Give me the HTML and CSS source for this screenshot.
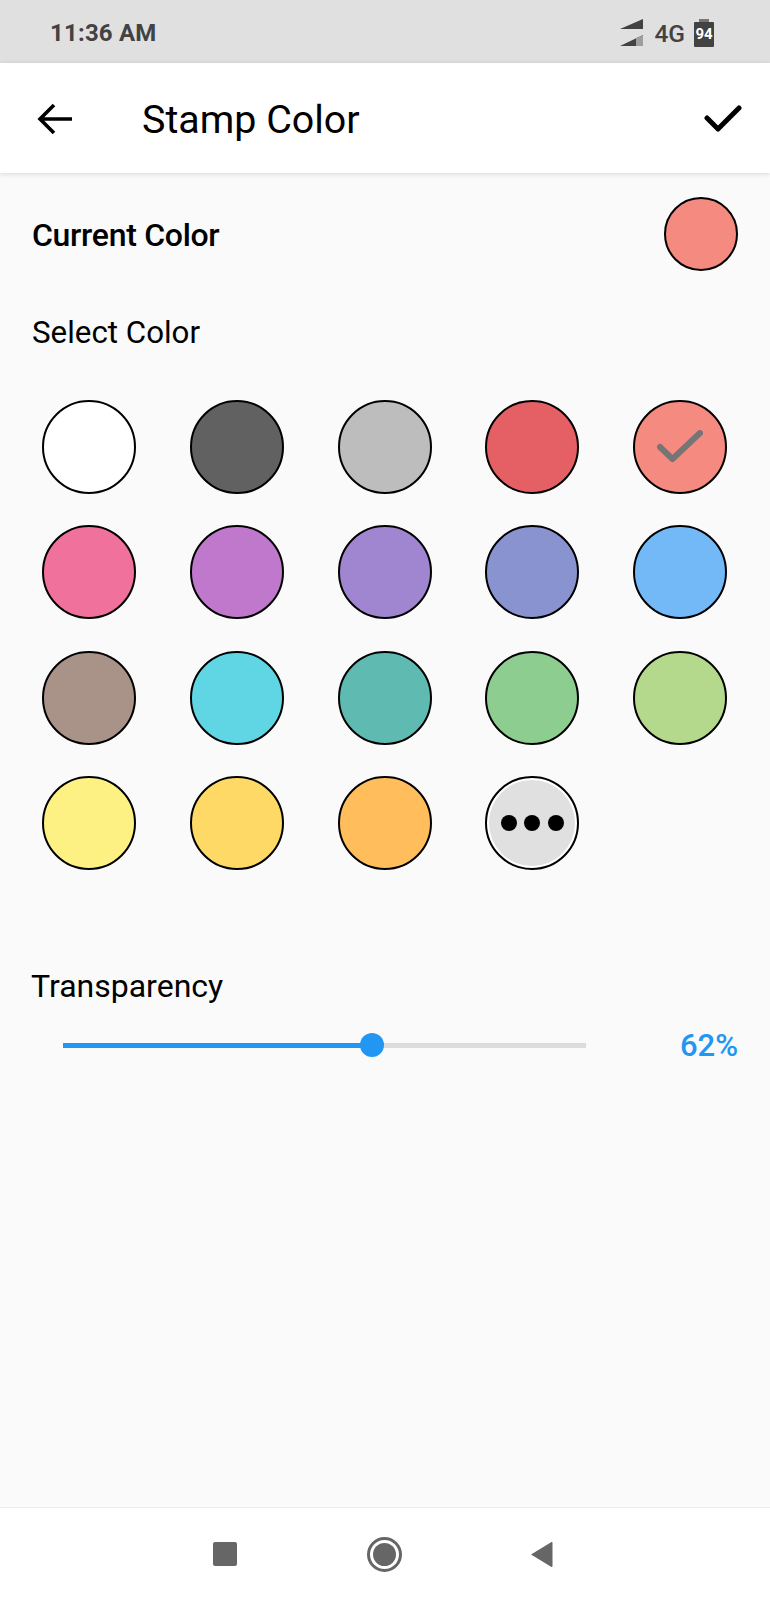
FILE: index.html
```html
<!DOCTYPE html>
<html>
<head>
    <meta charset="UTF-8">
    <title>Stamp Color</title>
    <link rel="stylesheet" href="styles.css">
</head>

<body>
<div class="page">

    <!-- Status bar -->
    <div class="status-bar">
        <span class="status-time">11:36 AM</span>
        <div class="status-icons">
            <svg class="signal-icon" width="24" height="28" viewBox="0 0 24 28">
                <path d="M0 10 L23 0 V10 Z" fill="#424242"/>
                <path d="M0 27 L23 16 V27 Z" fill="#424242"/>
                <path d="M16 19.5 L23 16 V27 H16 Z" fill="#9e9e9e"/>
            </svg>
            <span class="status-net">4G</span>
            <div class="battery"><span class="battery-level">94</span></div>
        </div>
    </div>

    <!-- App bar -->
    <div class="app-bar">
        <svg class="back-icon" width="36" height="32" viewBox="0 0 36 32">
            <path d="M35 16 H3 M17 2 L3 16 L17 30" fill="none" stroke="#000" stroke-width="3.6"/>
        </svg>
        <h1 class="app-title">Stamp Color</h1>
        <svg class="done-icon" width="38" height="28" viewBox="0 0 38 28">
            <path d="M3 13 L14 24 L35 3" fill="none" stroke="#000" stroke-width="5" stroke-linecap="round" stroke-linejoin="round"/>
        </svg>
    </div>

    <div class="content">
        <div class="current-row">
            <span class="current-label">Current Color</span>
            <span class="current-swatch"></span>
        </div>

        <div class="section-label">Select Color</div>

        <div class="swatch-grid">
            <span class="swatch c-white"></span>
            <span class="swatch c-dark"></span>
            <span class="swatch c-gray"></span>
            <span class="swatch c-red"></span>
            <span class="swatch c-salmon">
                <svg width="46" height="34" viewBox="0 0 46 34">
                    <path d="M3 17 L15.5 29 L43 3" fill="none" stroke="#757575" stroke-width="6" stroke-linecap="round" stroke-linejoin="round"/>
                </svg>
            </span>

            <span class="swatch c-pink"></span>
            <span class="swatch c-purple"></span>
            <span class="swatch c-violet"></span>
            <span class="swatch c-indigo"></span>
            <span class="swatch c-blue"></span>

            <span class="swatch c-brown"></span>
            <span class="swatch c-cyan"></span>
            <span class="swatch c-teal"></span>
            <span class="swatch c-green"></span>
            <span class="swatch c-lime"></span>

            <span class="swatch c-yellow"></span>
            <span class="swatch c-amber"></span>
            <span class="swatch c-orange"></span>
            <span class="swatch more-btn">
                <span class="more-dot"></span>
                <span class="more-dot"></span>
                <span class="more-dot"></span>
            </span>
        </div>

        <div class="transparency-label">Transparency</div>
        <div class="slider-row">
            <div class="slider">
                <div class="slider-fill" style="width: 59%"></div>
                <div class="slider-thumb" style="left: 59%"></div>
            </div>
            <span class="slider-value">62%</span>
        </div>
    </div>

    <!-- Navigation bar -->
    <div class="nav-bar">
        <span class="nav-square"></span>
        <span class="nav-home"><span class="nav-home-inner"></span></span>
        <svg width="23" height="27" viewBox="0 0 23 27">
            <path d="M1 13.5 L21.5 1 Q22.5 0.6 22.5 2 V25 Q22.5 26.4 21.5 26 Z" fill="#666"/>
        </svg>
    </div>

</div>
</body>
</html>
```

FILE: styles.css
```css
* {box-sizing: border-box;}
body {margin: 0; font-family: Roboto, "Liberation Sans", sans-serif; color: #000;}
.page {display: flex; flex-direction: column; height: 1600px; background-color: #fafafa;}

/* Status bar */
.status-bar {display: flex; justify-content: space-between; align-items: center; height: 63px; padding: 3px 56px 0 50px; background-color: #e0e0e0; color: #424242;}
.status-time {font-size: 24px; font-weight: 700; letter-spacing: 0.2px;}
.status-icons {display: flex; align-items: center;}
.signal-icon {margin-right: 10px;}
.status-net {font-size: 24.5px; font-weight: 500; margin-right: 9px;}
.battery {position: relative; display: flex; align-items: center; justify-content: center; width: 20px; height: 25px; margin-top: 2px; background-color: #424242; border-radius: 1px;}
.battery::before {content: ""; position: absolute; top: -3px; left: 5px; width: 10px; height: 3px; background-color: #757575;}
.battery-level {font-size: 15px; font-weight: 700; color: #fff;}

/* App bar */
.app-bar {position: relative; display: flex; align-items: center; height: 110px; padding: 2px 28px 0 37px; background-color: #fff; box-shadow: 0 1px 5px rgba(0, 0, 0, 0.14);}
.back-icon {flex: none;}
.app-title {flex: 1; margin: 2px 0 0 69px; font-size: 39.4px; font-weight: 400; line-height: 1;}

/* Content */
.content {flex: 1; padding: 24px 32px 0;}
.current-row {display: flex; justify-content: space-between; align-items: center; height: 74px;}
.current-label {padding-top: 2px; font-size: 32px; font-weight: 500; letter-spacing: -0.3px;}
.current-swatch {width: 74px; height: 74px; border: 2px solid #000; border-radius: 50%; background-color: #f58a80;}
.section-label {margin-top: 44px; font-size: 31.3px; line-height: 36px;}

.swatch-grid {display: grid; grid-template-columns: repeat(5, 94px); column-gap: 53.75px; row-gap: 31.4px; margin: 49px 0 0 10px;}
.swatch {display: flex; align-items: center; justify-content: center; width: 94px; height: 94px; border: 2px solid #000; border-radius: 50%;}
.c-white {background-color: #fff;}
.c-dark {background-color: #616161;}
.c-gray {background-color: #bdbdbd;}
.c-red {background-color: #e56065;}
.c-salmon {background-color: #f58a80;}
.c-pink {background-color: #f0719b;}
.c-purple {background-color: #bf78cc;}
.c-violet {background-color: #a085d0;}
.c-indigo {background-color: #8893d0;}
.c-blue {background-color: #74b9f7;}
.c-brown {background-color: #a99389;}
.c-cyan {background-color: #60d6e5;}
.c-teal {background-color: #5fbbb2;}
.c-green {background-color: #8ecd90;}
.c-lime {background-color: #b5d98c;}
.c-yellow {background-color: #fdf184;}
.c-amber {background-color: #ffd966;}
.c-orange {background-color: #ffbd5c;}
.more-btn {gap: 7.5px; background-color: #e0e0e0; box-shadow: inset 0 0 0 2px #fff;}
.more-dot {width: 16px; height: 16px; border-radius: 50%; background-color: #000;}

/* Transparency slider */
.transparency-label {margin-top: 98px; margin-left: -1px; font-size: 32px; line-height: 36px;}
.slider-row {display: flex; justify-content: space-between; align-items: center; height: 40px; margin-top: 21px; padding-left: 31px;}
.slider {position: relative; width: 523px; height: 5px; background-color: #dcdcdc;}
.slider-fill {height: 100%; background-color: #2196f3;}
.slider-thumb {position: absolute; top: 50%; width: 24px; height: 24px; margin: -12px 0 0 -12px; border-radius: 50%; background-color: #2196f3;}
.slider-value {font-size: 31px; font-weight: 500; color: #2196f3;}

/* Navigation bar */
.nav-bar {display: flex; justify-content: space-between; align-items: center; height: 93px; padding: 0 217px 0 213px; background-color: #fff; border-top: 1px solid #eee;}
.nav-square {width: 24px; height: 24px; border-radius: 2px; background-color: #666;}
.nav-home {display: flex; align-items: center; justify-content: center; width: 35px; height: 35px; margin-left: 1px; border: 3px solid #666; border-radius: 50%;}
.nav-home-inner {width: 23px; height: 23px; border-radius: 50%; background-color: #666;}
```
